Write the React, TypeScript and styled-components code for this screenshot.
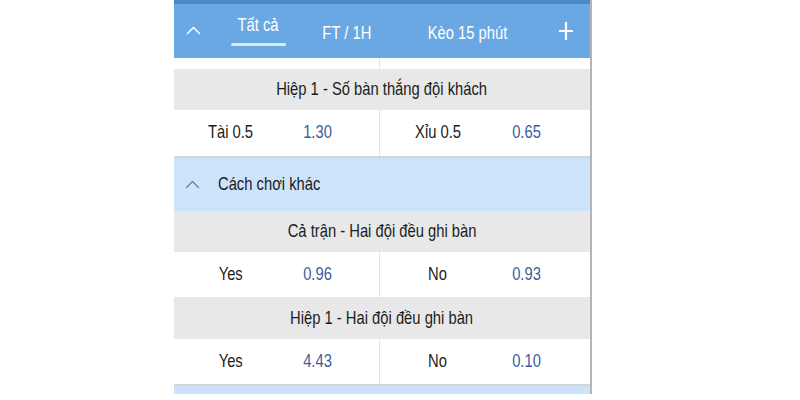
import React from "react";
import styled, { createGlobalStyle } from "styled-components";

const Global = createGlobalStyle`
  html, body { margin: 0; padding: 0; background: #ffffff; }
  body { font-family: "Liberation Sans", Arial, sans-serif; }
`;

const Page = styled.div`
  width: 800px;
  height: 400px;
  padding-left: 174px;
  box-sizing: border-box;
  overflow: hidden;
`;

const Panel = styled.div`
  width: 418px;
  height: 394px;
  box-sizing: border-box;
  border-right: 2px solid #b4b4b4;
  display: flex;
  flex-direction: column;
  background: #ffffff;
`;

const Narrow = styled.span<{ $origin?: string }>`
  display: inline-block;
  white-space: nowrap;
  transform: scale(0.82, 1.03);
  transform-origin: ${(p) => p.$origin || "center"};
`;

const TopStrip = styled.div`
  height: 4px;
  background: #4f88c6;
`;

const Header = styled.div`
  height: 54px;
  background: #6aa8e4;
  display: flex;
  align-items: center;
  color: #ffffff;
  font-size: 18px;
`;

const HeaderCell = styled.div<{ $w: number }>`
  width: ${(p) => p.$w}px;
  height: 100%;
  display: flex;
  align-items: center;
  justify-content: center;
`;

const Tab = styled.div<{ $w: number; $active?: boolean }>`
  width: ${(p) => p.$w}px;
  height: 100%;
  display: flex;
  flex-direction: column;
  align-items: center;
  justify-content: center;
  padding-top: ${(p) => (p.$active ? "0" : "6px")};
  box-sizing: border-box;
`;

const Underline = styled.div`
  width: 55px;
  height: 3px;
  margin-top: 7px;
  background: #dbeafa;
  border-radius: 2px;
`;

const GapStrip = styled.div`
  height: 11px;
  display: grid;
  grid-template-columns: 206px 1fr;
  & > div:first-child { border-right: 1px solid #e4e4e4; }
`;

const Heading = styled.div<{ $h: number }>`
  height: ${(p) => p.$h}px;
  background: #e8e8e8;
  display: flex;
  align-items: center;
  justify-content: center;
  font-size: 18px;
  color: #1c1c1c;
`;

const Row = styled.div<{ $h: number; $border?: boolean }>`
  height: ${(p) => p.$h}px;
  display: grid;
  grid-template-columns: 206px 1fr;
  border-bottom: ${(p) => (p.$border ? "2px solid #d4d4d4" : "none")};
  box-sizing: border-box;
`;

const Half = styled.div`
  display: grid;
  grid-template-columns: 55% 30% 1fr;
  align-items: center;
  font-size: 18px;
  &:first-child { border-right: 1px solid #e4e4e4; }
`;

const Label = styled.span`
  text-align: center;
  color: #1c1c1c;
`;

const Odds = styled.span`
  text-align: center;
  color: #3d5c9c;
`;

const Section = styled.div<{ $h: number }>`
  height: ${(p) => p.$h}px;
  background: #cce4fb;
  display: flex;
  align-items: center;
  padding-left: 11px;
  gap: 18px;
  font-size: 18px;
  color: #1c1c1c;
`;

const Chevron = ({ color, size, stroke }: { color: string; size: number; stroke: number }) => (
  <svg width={size} height={size * 0.6} viewBox="0 0 20 12" fill="none">
    <path d="M2 10 L10 2 L18 10" stroke={color} strokeWidth={stroke} strokeLinecap="round" strokeLinejoin="round" />
  </svg>
);

const Plus = () => (
  <svg width="14" height="18" viewBox="0 0 14 18">
    <path d="M7 0 V18 M0 9 H14" stroke="#ffffff" strokeWidth="2.2" />
  </svg>
);

type Bet = { l1: string; o1: string; l2: string; o2: string };

const OddsRow = ({ b, h, border }: { b: Bet; h: number; border?: boolean }) => (
  <Row $h={h} $border={border}>
    <Half>
      <Label><Narrow>{b.l1}</Narrow></Label>
      <Odds><Narrow>{b.o1}</Narrow></Odds>
    </Half>
    <Half>
      <Label><Narrow>{b.l2}</Narrow></Label>
      <Odds><Narrow>{b.o2}</Narrow></Odds>
    </Half>
  </Row>
);

export default function App() {
  return (
    <Page>
      <Global />
      <Panel>
        <TopStrip />
        <Header>
          <HeaderCell $w={38}>
            <Chevron color="#ffffff" size={15} stroke={2} />
          </HeaderCell>
          <Tab $w={92} $active>
            <Narrow>Tất cả</Narrow>
            <Underline />
          </Tab>
          <Tab $w={86}><Narrow>FT / 1H</Narrow></Tab>
          <Tab $w={156}><Narrow>Kèo 15 phút</Narrow></Tab>
          <HeaderCell $w={40}>
            <Plus />
          </HeaderCell>
        </Header>
        <GapStrip>
          <div />
          <div />
        </GapStrip>
        <Heading $h={41}><Narrow>Hiệp 1 - Số bàn thắng đội khách</Narrow></Heading>
        <OddsRow b={{ l1: "Tài 0.5", o1: "1.30", l2: "Xỉu 0.5", o2: "0.65" }} h={48} border />
        <Section $h={54}>
          <Chevron color="#7a7a7a" size={15} stroke={1.6} />
          <Narrow $origin="left">Cách chơi khác</Narrow>
        </Section>
        <Heading $h={41}><Narrow>Cả trận - Hai đội đều ghi bàn</Narrow></Heading>
        <OddsRow b={{ l1: "Yes", o1: "0.96", l2: "No", o2: "0.93" }} h={45} />
        <Heading $h={42}><Narrow>Hiệp 1 - Hai đội đều ghi bàn</Narrow></Heading>
        <OddsRow b={{ l1: "Yes", o1: "4.43", l2: "No", o2: "0.10" }} h={47} border />
        <Section $h={8} />
      </Panel>
    </Page>
  );
}
